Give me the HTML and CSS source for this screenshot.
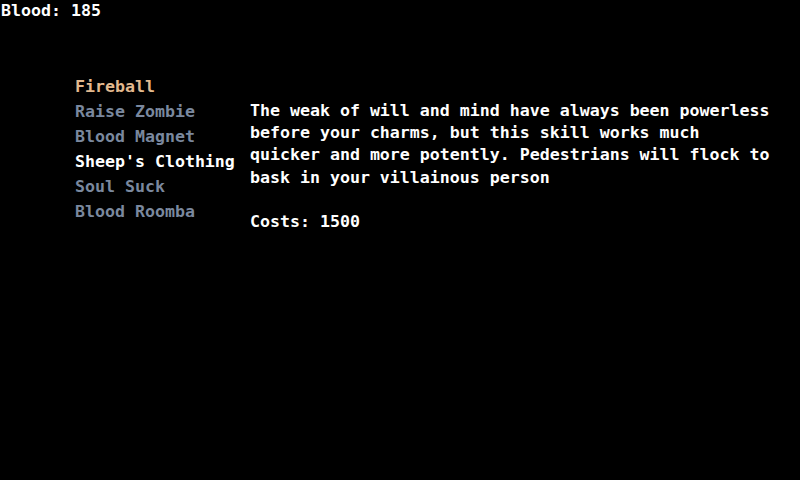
FILE: index.html
```html
<!DOCTYPE html>
<html lang="en">
<head>
  <meta charset="UTF-8" />
  <title>Skills</title>
  <link rel="stylesheet" href="styles.css">
</head>
<body>
  <div class="hud">Blood: 185</div>

  <div class="shop">
    <ul class="skill-list">
      <li class="skill bought">Fireball</li>
      <li class="skill">Raise Zombie</li>
      <li class="skill">Blood Magnet</li>
      <li class="skill selected">Sheep's Clothing</li>
      <li class="skill">Soul Suck</li>
      <li class="skill">Blood Roomba</li>
    </ul>

    <div class="skill-info">
      <p class="desc">The weak of will and mind have always been powerless before your charms, but this skill works much quicker and more potently. Pedestrians will flock to bask in your villainous person</p>
      <p class="cost">Costs: 1500</p>
    </div>
  </div>
</body>
</html>
```

FILE: styles.css
```css
body {
  margin: 0;
  background-color: #000;
  color: #fff;
  font-family: "DejaVu Sans Mono", "Liberation Mono", monospace;
  font-weight: bold;
  font-size: 16.6px;
  width: 800px;
  height: 480px;
  overflow: hidden;
}

.hud {
  line-height: 22px;
  padding-left: 1px;
}

.shop {
  display: flex;
  padding-left: 75px;
  margin-top: 51.5px;
}

.skill-list {
  list-style: none;
  margin: 0;
  padding: 0;
  width: 175px;
}

.skill {
  line-height: 25px;
  color: #7a889e;
}

.skill.bought {
  color: #e2b98e;
}

.skill.selected {
  color: #fff;
}

.skill-info {
  width: 525px;
  margin-top: 26.3px;
  line-height: 22.3px;
}

.skill-info p {
  margin: 0;
}

.cost {
  margin-top: 22.3px !important;
}
```
